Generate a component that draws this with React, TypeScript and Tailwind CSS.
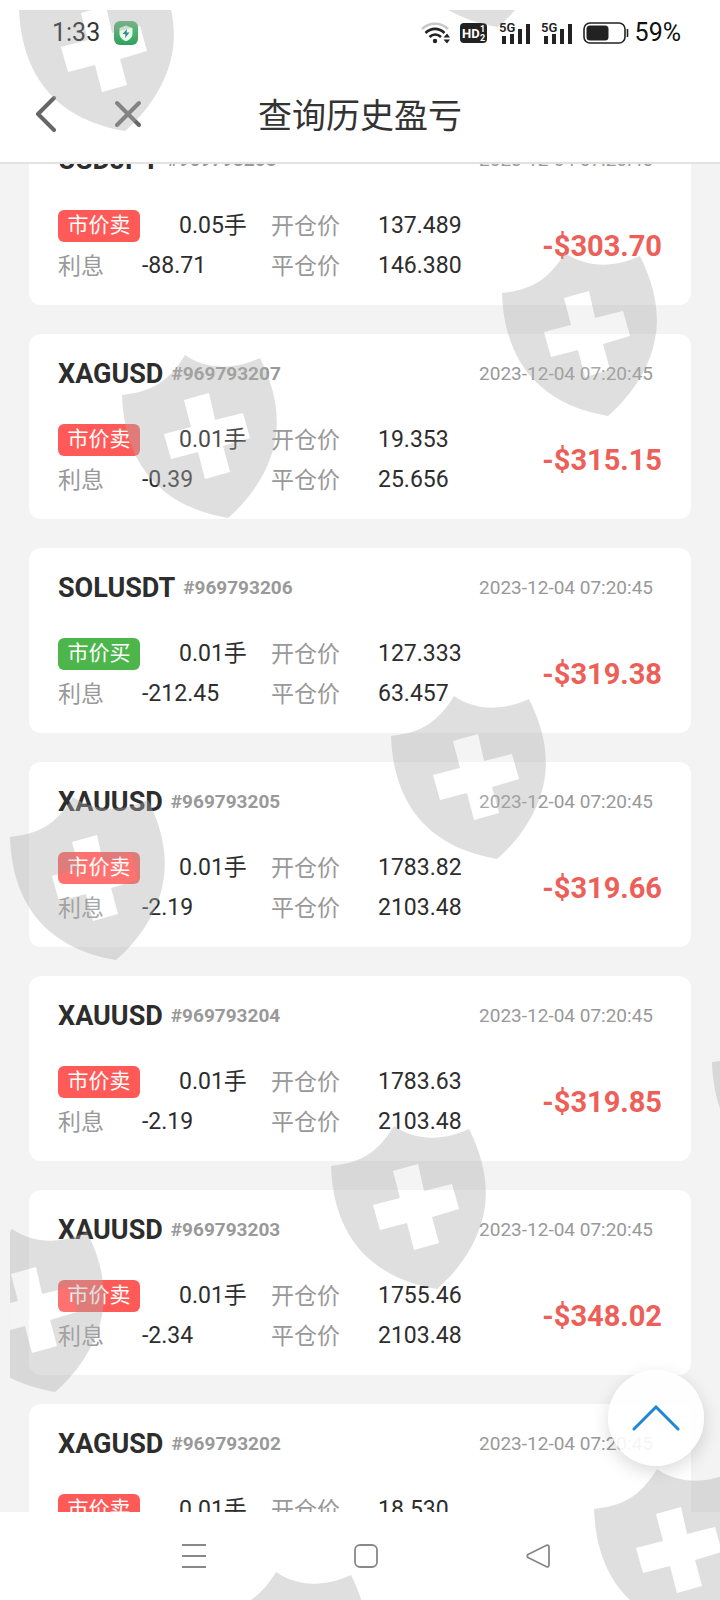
import React, { useLayoutEffect, useRef } from 'react';

interface Trade {
  symbol: string;
  id: string;
  side: 'buy' | 'sell';
  lots: string;
  swap: string;
  open: string;
  close: string;
  time: string;
  profit: string;
}

const TRADES: Trade[] = [
  { symbol: 'USDJPY', id: '969793208', side: 'sell', lots: '0.05', swap: '-88.71', open: '137.489', close: '146.380', time: '2023-12-04 07:20:45', profit: '-$303.70' },
  { symbol: 'XAGUSD', id: '969793207', side: 'sell', lots: '0.01', swap: '-0.39', open: '19.353', close: '25.656', time: '2023-12-04 07:20:45', profit: '-$315.15' },
  { symbol: 'SOLUSDT', id: '969793206', side: 'buy', lots: '0.01', swap: '-212.45', open: '127.333', close: '63.457', time: '2023-12-04 07:20:45', profit: '-$319.38' },
  { symbol: 'XAUUSD', id: '969793205', side: 'sell', lots: '0.01', swap: '-2.19', open: '1783.82', close: '2103.48', time: '2023-12-04 07:20:45', profit: '-$319.66' },
  { symbol: 'XAUUSD', id: '969793204', side: 'sell', lots: '0.01', swap: '-2.19', open: '1783.63', close: '2103.48', time: '2023-12-04 07:20:45', profit: '-$319.85' },
  { symbol: 'XAUUSD', id: '969793203', side: 'sell', lots: '0.01', swap: '-2.34', open: '1755.46', close: '2103.48', time: '2023-12-04 07:20:45', profit: '-$348.02' },
  { symbol: 'XAGUSD', id: '969793202', side: 'sell', lots: '0.01', swap: '-2.19', open: '18.530', close: '25.656', time: '2023-12-04 07:20:45', profit: '-$356.30' },
];

const INITIAL_SCROLL = 73;

const SignalIcon: React.FC = () => (
  <svg width="32" height="24" viewBox="0 0 32 24" fill="#222">
    <text x="0" y="11" fontSize="13" fontWeight="600" fontFamily="Roboto">5G</text>
    <rect x="3" y="15" width="4" height="8" />
    <rect x="11" y="13" width="4" height="10" />
    <rect x="19" y="8" width="4" height="15" />
    <rect x="27" y="3" width="4" height="20" />
  </svg>
);

const StatusBar: React.FC = () => (
  <div className="flex h-[66px] items-center pr-[39px] pl-[52px] text-[25px] leading-8 text-[#111]">
    <span>1:33</span>
    <svg className="ml-3.5" width="24" height="24" viewBox="0 0 24 24">
      <defs>
        <linearGradient id="guard" x1="0" y1="0" x2="0" y2="1">
          <stop offset="0" stopColor="#4fb56d" />
          <stop offset="1" stopColor="#0d9040" />
        </linearGradient>
      </defs>
      <rect width="24" height="24" rx="6" fill="url(#guard)" />
      <path d="M12 4.500L18.500 7V12.500C18.500 16.500 15.500 18.800 12 20.200C8.500 18.800 5.500 16.500 5.500 12.500V7Z" fill="#e2fbe6" />
      <path d="M13 8L8.500 13H11.500L11 17L15.500 11.500H12.500Z" fill="#10707c" />
    </svg>

    <div className="ml-auto flex items-center">
      <svg width="29" height="24" viewBox="0 0 29 24" fill="none" strokeWidth="2.600">
        <path d="M1 8C8 1 20 1 27 8" stroke="#c8c8c8" />
        <path d="M4.500 12C10 6.500 18 6.500 23.500 12" stroke="#222" />
        <path d="M8.500 16C12 12.800 16.500 12.800 20 16" stroke="#222" />
        <circle cx="14" cy="20" r="2.200" fill="#222" />
        <path d="M22.500 16.500L26 12.500L29 16.500ZM22.500 18.500H29L26 22.500Z" fill="#222" />
      </svg>
      <svg className="ml-2.5" width="27" height="20" viewBox="0 0 27 20" fontFamily="Roboto" fontWeight="700">
        <rect width="27" height="20" rx="4" fill="#222" />
        <text x="2" y="15" fontSize="13" fill="#fff">HD</text>
        <text x="20" y="9" fontSize="9" fill="#fff">1</text>
        <text x="20" y="18" fontSize="9" fill="#fff">2</text>
      </svg>
      <div className="ml-3 flex gap-2.5">
        <SignalIcon />
        <SignalIcon />
      </div>
      <svg className="ml-2.5" width="46" height="22" viewBox="0 0 46 22">
        <rect x="1" y="1" width="41" height="20" rx="6" fill="none" stroke="#222" strokeWidth="1.600" />
        <rect x="3.500" y="3.500" width="22" height="15" rx="3.500" fill="#222" />
        <path d="M44.500 7V15" stroke="#222" strokeWidth="1.600" />
      </svg>
      <span className="ml-1.5">59%</span>
    </div>
  </div>
);

const Header: React.FC = () => (
  <header className="grid h-[98px] grid-cols-[1fr_auto_1fr] items-center border-b-2 border-[#e2e2e2] px-[34px]">
    <div className="flex items-center gap-14">
      <button type="button" aria-label="返回" className="cursor-pointer">
        <svg width="24" height="36" viewBox="0 0 24 36" fill="none" stroke="#666" strokeWidth="4" strokeLinecap="round" strokeLinejoin="round">
          <path d="M20 2L4 18L20 34" />
        </svg>
      </button>
      <button type="button" aria-label="关闭" className="cursor-pointer">
        <svg width="28" height="28" viewBox="0 0 28 28" fill="none" stroke="#666" strokeWidth="4" strokeLinecap="round">
          <path d="M3 3L25 25M25 3L3 25" />
        </svg>
      </button>
    </div>
    <h1 className="pt-1 text-[34px] leading-10 text-[#333]">查询历史盈亏</h1>
  </header>
);

const TradeCard: React.FC<{ trade: Trade }> = ({ trade }) => {
  const isSell = trade.side === 'sell';

  return (
    <li className="h-[185px] rounded-xl bg-white px-[29px] pt-6">
      <div className="flex h-8 items-center pr-[9px]">
        <h2 className="text-[27px] leading-8 font-bold text-[#2d2d2d]">{trade.symbol}</h2>
        <span className="ml-2 text-[19px] leading-8 font-bold text-[#999]">#{trade.id}</span>
        <time className="ml-auto text-[19px] leading-8 text-[#999]">{trade.time}</time>
      </div>

      <div className="mt-[30px] flex items-center text-[23px]">
        <div className="w-[213px]">
          <div className="flex h-10 items-center">
            <span
              className={`mr-[39px] flex h-8 w-[82px] items-center justify-center rounded-md text-[21px] text-white ${
                isSell ? 'bg-[#ff5a57]' : 'bg-[#4cb64c]'
              }`}
            >
              {isSell ? '市价卖' : '市价买'}
            </span>
            <span className="text-[#2d2d2d]">{trade.lots}手</span>
          </div>
          <div className="flex h-10 items-center">
            <span className="w-[84px] pt-0.5 text-[#999]">利息</span>
            <span className="text-[#2d2d2d]">{trade.swap}</span>
          </div>
        </div>

        <dl className="grid grid-cols-[107px_auto] text-[#2d2d2d]">
          <dt className="flex h-10 items-center pt-0.5 text-[#999]">开仓价</dt>
          <dd className="flex h-10 items-center">{trade.open}</dd>
          <dt className="flex h-10 items-center pt-0.5 text-[#999]">平仓价</dt>
          <dd className="flex h-10 items-center">{trade.close}</dd>
        </dl>

        <strong className="ml-auto text-[29px] leading-8 font-bold text-[#ec6059]">{trade.profit}</strong>
      </div>
    </li>
  );
};

const NavBar: React.FC = () => (
  <nav className="flex h-[88px] items-center justify-center gap-[148px] bg-white pl-3">
    <button type="button" aria-label="菜单">
      <svg width="24" height="26" viewBox="0 0 24 26" stroke="#888" strokeWidth="2">
        <path d="M0 2H24M0 13H24M0 24H24" />
      </svg>
    </button>
    <button type="button" aria-label="主屏幕">
      <svg width="24" height="24" viewBox="0 0 24 24" fill="none" stroke="#888" strokeWidth="1.800">
        <rect x="1" y="1" width="22" height="22" rx="5" />
      </svg>
    </button>
    <button type="button" aria-label="后退">
      <svg width="24" height="24" viewBox="0 0 24 24" fill="none" stroke="#888" strokeWidth="1.800" strokeLinejoin="round">
        <path d="M2 10.500L20.500 1.300Q23 .600 23 3.500V20.500Q23 23.400 20.500 22.700L2 13.500Q.500 12 2 10.500Z" />
      </svg>
    </button>
  </nav>
);

// Top left corners of the shields scattered over the screen
const SHIELDS = [
  [19, -32],
  [392, -136],
  [502, 253],
  [122, 355],
  [391, 696],
  [10, 797],
  [712, 1022],
  [331, 1126],
  [-51, 1229],
  [594, 1469],
  [213, 1572],
];

const Watermark: React.FC = () => (
  <svg className="pointer-events-none absolute inset-0 h-full w-full" aria-hidden="true">
    <defs>
      <clipPath id="margin">
        <rect x="10" y="10" width="100%" height="100%" />
      </clipPath>
      <g id="shield">
        <path
          fill="#afafaf"
          fillOpacity="0.400"
          fillRule="evenodd"
          d="M0 40C28 37 46 28 63 0C85 15 112 15 138 3C155 37 158 66 152 91C145 120 126 146 106 163C30 150 2 100 0 40ZM62 45L87 38L93 65L121 58L128 83L101 91L108 117L83 124L76 97L49 104L42 79L69 72Z"
        />
        <path fill="#fff" fillOpacity="0.150" d="M62 45L87 38L93 65L121 58L128 83L101 91L108 117L83 124L76 97L49 104L42 79L69 72Z" />
      </g>
    </defs>
    <g clipPath="url(#margin)">
      {SHIELDS.map(([x, y]) => (
        <use key={`${x},${y}`} href="#shield" x={x} y={y} />
      ))}
    </g>
  </svg>
);

export default function App() {
  const listRef = useRef<HTMLElement>(null);

  useLayoutEffect(() => {
    if (listRef.current) listRef.current.scrollTop = INITIAL_SCROLL;
  }, []);

  return (
    <div className="relative flex h-screen flex-col overflow-hidden bg-white font-[Roboto,'Noto_Sans_CJK_SC',sans-serif]">
      <StatusBar />
      <Header />

      <main ref={listRef} className="min-h-0 flex-1 overflow-y-auto bg-[#f3f3f3] [scrollbar-width:none]">
        <ul className="flex flex-col gap-[29px] px-[29px] py-[29px]">
          {TRADES.map((trade) => (
            <TradeCard key={trade.id} trade={trade} />
          ))}
        </ul>
      </main>

      <NavBar />

      {/* Back to top */}
      <button
        type="button"
        aria-label="回到顶部"
        onClick={() => listRef.current?.scrollTo({ top: 0, behavior: 'smooth' })}
        className="absolute right-4 bottom-[134px] flex size-24 cursor-pointer items-center justify-center rounded-full bg-white/90 shadow-[0_6px_18px_rgba(0,0,0,0.14)]"
      >
        <svg width="48" height="26" viewBox="0 0 48 26" fill="none" stroke="#1e88d8" strokeWidth="3" strokeLinecap="round">
          <path d="M2 24L24 2L46 24" />
        </svg>
      </button>

      <Watermark />
    </div>
  );
}
